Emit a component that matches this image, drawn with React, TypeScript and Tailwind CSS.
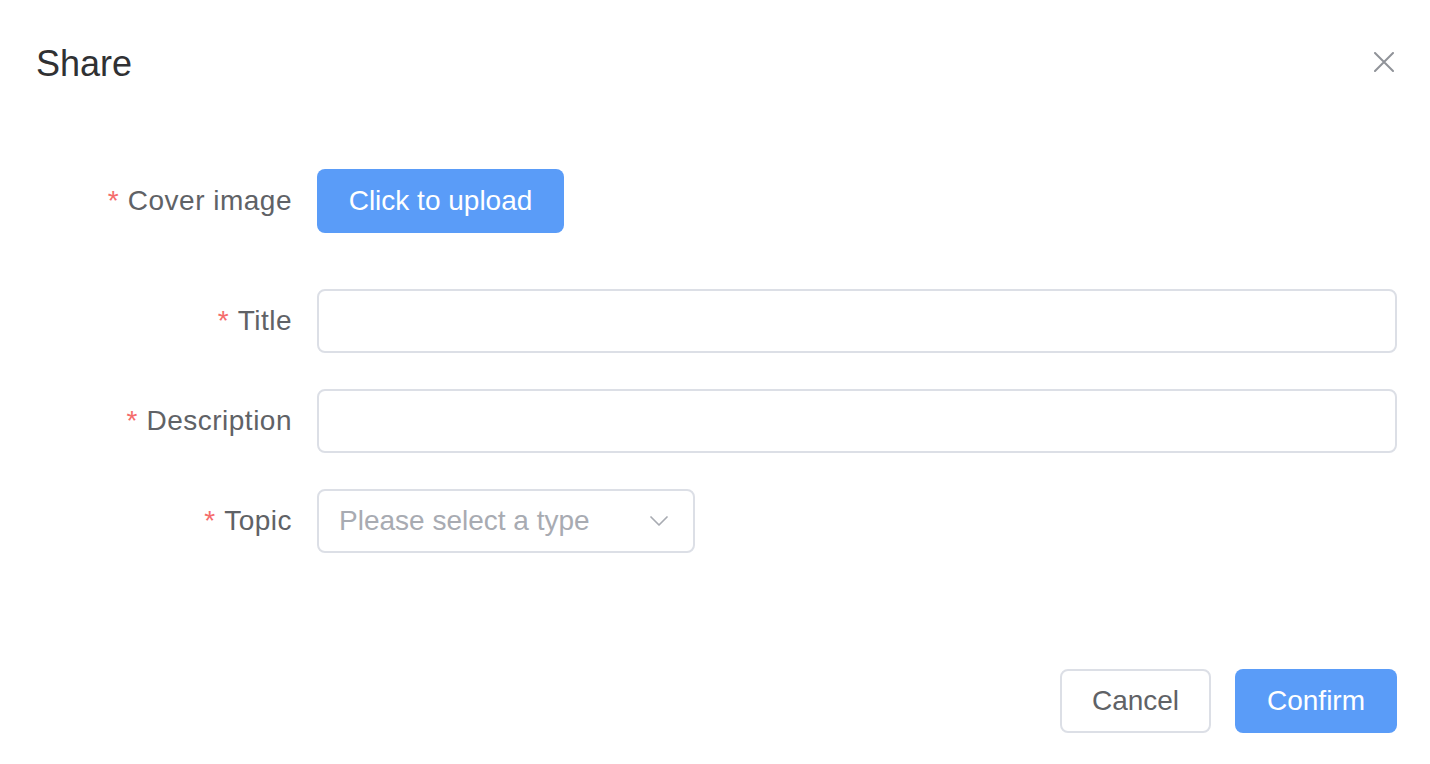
import { ChevronDown } from "lucide-react";

function Label({ text }: { text: string }) {
  return (
    <div className="w-[317px] pr-[25px] text-right text-[28px] text-[#606266] shrink-0">
      <span className="text-[#f56c6c] mr-[9px]">*</span>
      <span className="tracking-[0.5px]">{text}</span>
    </div>
  );
}

export default function App() {
  return (
    <div className="w-[1430px] h-[764px] bg-white flex flex-col font-['Liberation_Sans',Arial,sans-serif]">
      <div className="flex items-center justify-between pl-[36px] pr-[36px] pt-[40px]">
        <span className="text-[36px] leading-[48px] text-[#303133]">Share</span>
        <svg width="20" height="20" viewBox="0 0 20 20" className="mb-[4px]">
          <path d="M1 1 L19 19 M19 1 L1 19" stroke="#909399" strokeWidth="2" strokeLinecap="round" />
        </svg>
      </div>

      <div className="mt-[81px] flex flex-col pr-[33px]">
        <div className="flex items-center h-16 mb-[56px]">
          <Label text="Cover image" />
          <button className="h-16 w-[247px] rounded-lg bg-[#5a9cf8] text-white text-[28px]">
            Click to upload
          </button>
        </div>

        <div className="flex items-center h-16 mb-[36px]">
          <Label text="Title" />
          <div className="flex-1 h-16 rounded-lg border-2 border-[#dcdfe6]" />
        </div>

        <div className="flex items-center h-16 mb-[36px]">
          <Label text="Description" />
          <div className="flex-1 h-16 rounded-lg border-2 border-[#dcdfe6]" />
        </div>

        <div className="flex items-center h-16">
          <Label text="Topic" />
          <div className="w-[378px] h-16 rounded-lg border-2 border-[#dcdfe6] flex items-center justify-between pl-[20px] pr-[18px]">
            <span className="text-[28px] text-[#a8abb2]">Please select a type</span>
            <ChevronDown size={32} strokeWidth={1.3} color="#a8abb2" />
          </div>
        </div>
      </div>

      <div className="mt-[116px] flex justify-end gap-6 pr-[33px]">
        <button className="h-16 w-[151px] rounded-lg border-2 border-[#dcdfe6] bg-white text-[28px] text-[#606266]">
          Cancel
        </button>
        <button className="h-16 w-[162px] rounded-lg bg-[#5a9cf8] text-white text-[28px]">
          Confirm
        </button>
      </div>
    </div>
  );
}
